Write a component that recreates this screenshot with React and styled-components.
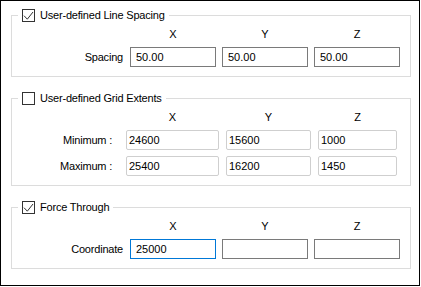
import React from "react";
import styled, { createGlobalStyle } from "styled-components";

const Global = createGlobalStyle`
  html, body { margin: 0; padding: 0; background: #fff; }
  body { font-family: "Liberation Sans", Arial, sans-serif; font-size: 11px; color: #000; }
`;

const Window = styled.div`
  width: 420px;
  height: 286px;
  box-sizing: border-box;
  border: 1px solid #000;
  background: #fff;
  display: flex;
  flex-direction: column;
  gap: 14px;
  padding: 7px 8px 0 10px;
`;

const Group = styled.fieldset`
  margin: 0;
  min-width: 0;
  border: 1px solid #dcdcdc;
  padding: 4px 0 9px 0;
`;

const Legend = styled.legend`
  margin-left: 6px;
  padding: 0 4px;
  display: flex;
  align-items: center;
  gap: 5px;
  height: 15px;
  line-height: 15px;
  letter-spacing: -0.2px;
`;

const Box = styled.span`
  width: 13px;
  height: 13px;
  box-sizing: border-box;
  border: 1px solid #333;
  background: #fff;
  display: inline-flex;
`;

const Grid = styled.div`
  display: grid;
  grid-template-columns: ${(p) => p.$cols};
  column-gap: ${(p) => p.$gap}px;
  row-gap: 6px;
  grid-auto-rows: 20px;
  grid-template-rows: 14px;
  align-items: center;
`;

const Head = styled.div`
  text-align: center;
  line-height: 14px;
`;

const Label = styled.div`
  justify-self: end;
  padding-right: ${(p) => p.$pr}px;
  letter-spacing: -0.2px;
  white-space: pre;
`;

const Field = styled.input`
  box-sizing: border-box;
  width: 100%;
  height: 20px;
  margin: 0;
  border: 1px solid ${(p) => (p.$focused ? "#0078d7" : p.$soft ? "#cfcfcf" : "#7a7a7a")};
  border-radius: ${(p) => (p.$soft ? "2px" : "0")};
  padding: 0 0 0 ${(p) => (p.$soft ? 2 : 5)}px;
  font-family: "Liberation Sans", Arial, sans-serif;
  font-size: 11px;
  color: #000;
  background: #fff;
  outline: none;
`;

function Check({ checked }) {
  return (
    <Box>
      {checked && (
        <svg width="11" height="11" viewBox="0 0 11 11">
          <polyline points="1,5.7 4.3,9.2 10,2" fill="none" stroke="#333" strokeWidth="1" />
        </svg>
      )}
    </Box>
  );
}

function Headers() {
  return (
    <>
      <div />
      <Head>X</Head>
      <Head>Y</Head>
      <Head>Z</Head>
    </>
  );
}

export default function App() {
  return (
    <>
      <Global />
      <Window>
        <Group>
          <Legend>
            <Check checked />
            User-defined Line Spacing
          </Legend>
          <Grid $cols="112px 86px 86px 86px" $gap={6}>
            <Headers />
            <Label $pr={1}>Spacing</Label>
            <Field readOnly value="50.00" />
            <Field readOnly value="50.00" />
            <Field readOnly value="50.00" />
          </Grid>
        </Group>
        <Group>
          <Legend>
            <Check />
            User-defined Grid Extents
          </Legend>
          <Grid $cols="107px 93px 85px 79px" $gap={7}>
            <Headers />
            <Label $pr={7}>Minimum :</Label>
            <Field $soft readOnly value="24600" />
            <Field $soft readOnly value="15600" />
            <Field $soft readOnly value="1000" />
            <Label $pr={7}>Maximum :</Label>
            <Field $soft readOnly value="25400" />
            <Field $soft readOnly value="16200" />
            <Field $soft readOnly value="1450" />
          </Grid>
        </Group>
        <Group>
          <Legend>
            <Check checked />
            Force Through
          </Legend>
          <Grid $cols="112px 86px 86px 86px" $gap={6}>
            <Headers />
            <Label $pr={1}>Coordinate</Label>
            <Field $focused readOnly value="25000" />
            <Field readOnly value="" />
            <Field readOnly value="" />
          </Grid>
        </Group>
      </Window>
    </>
  );
}
